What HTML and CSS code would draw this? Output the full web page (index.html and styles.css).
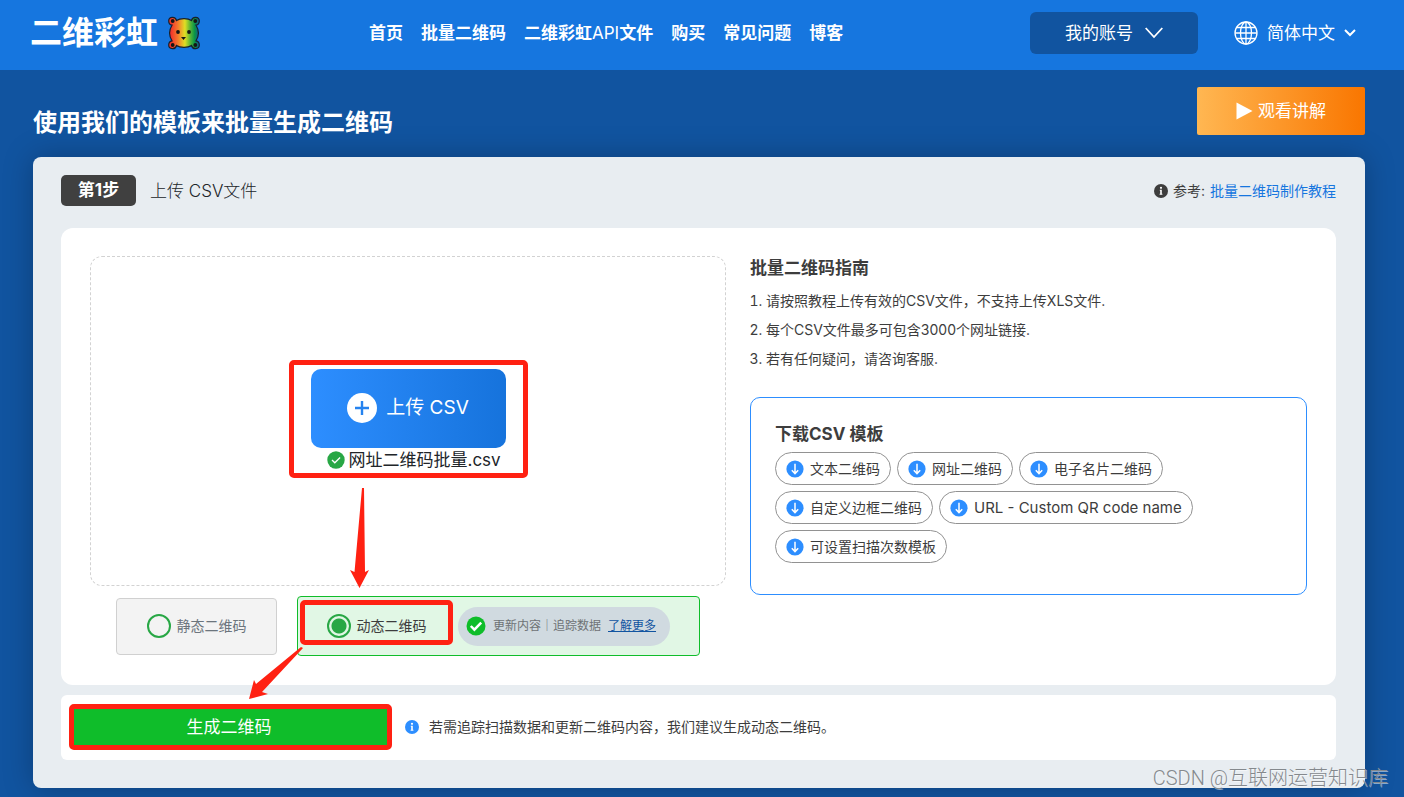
FILE: index.html
```html
<!DOCTYPE html>
<html lang="zh-CN">
<head>
<meta charset="utf-8">
<meta name="viewport" content="width=device-width, initial-scale=1">
<title>二维彩虹 - 批量二维码</title>
<link rel="stylesheet" href="styles.css">
</head>
<body>
<svg class="sprite" aria-hidden="true">
  <symbol id="down" viewBox="0 0 18 18"><circle cx="9" cy="9" r="8.6" fill="#2d8eff"/><path d="M9 3.8v9.6M5.8 10.3 9 13.6l3.2-3.3" fill="none" stroke="#fff" stroke-width="1.5"/></symbol>
  <symbol id="info" viewBox="0 0 14 14"><circle cx="7" cy="7" r="7" fill="currentColor"/><circle cx="7" cy="3.8" r="1.1" fill="#fff"/><path d="M5.8 5.8h2v4h.6v1H5.6v-1h.6V6.800h-.4z" fill="#fff"/></symbol>
</svg>
<header class="topbar">
  <a class="logo" href="#">二维彩虹
    <svg width="32" height="34" viewBox="0 0 32 34" aria-hidden="true">
      <defs><linearGradient id="rainbow"><stop offset="0.08" stop-color="#f2352b"/><stop offset="0.3" stop-color="#f5792d"/><stop offset="0.53" stop-color="#dfdf24"/><stop offset="0.7" stop-color="#5cb635"/><stop offset="0.85" stop-color="#079447"/><stop offset="1" stop-color="#16529b"/></linearGradient></defs>
      <path d="M8.500 4.500C12 2 20 2 23.500 4.500C24.500 0 31.300.5 31.300 5C31.300 7.800 29 9 28 9.200C31 14 31 20 28 24.800C29 25 31.300 26.200 31.300 29C31.300 33.500 24.500 34 23.500 29.500C20 32 12 32 8.500 29.500C7.500 34 .7 33.500.7 29C.7 26.200 3 25 4 24.800C1 20 1 14 4 9.200C3 9 .7 7.800.7 5C.7.5 7.500 0 8.500 4.500Z" fill="url(#rainbow)" stroke="#17202b" stroke-width="1.200"/>
      <g fill="#151515"><circle cx="4.700" cy="5" r="1.900"/><circle cx="27.300" cy="5" r="1.900"/><circle cx="4.700" cy="29" r="1.900"/><circle cx="27.300" cy="29" r="1.900"/><circle cx="10" cy="16" r="1.900"/><circle cx="21" cy="16" r="1.900"/><path d="M13 21h5l-2.500 3z"/></g>
    </svg>
  </a>
  <nav class="nav"><a href="#">首页</a><a href="#">批量二维码</a><a href="#">二维彩虹<span class="thin">API</span>文件</a><a href="#">购买</a><a href="#">常见问题</a><a href="#">博客</a></nav>
  <div class="actions">
    <button class="account" type="button">我的账号
      <svg width="18" height="12" viewBox="0 0 18 12" fill="none" stroke="#fff" stroke-width="1.800"><path d="m.7 1 8.300 9 8.300-9"/></svg>
    </button>
    <label class="language">
      <svg width="24" height="24" viewBox="0 0 24 24" fill="none" stroke="#fff" stroke-width="1.300"><circle cx="12" cy="12" r="11"/><ellipse cx="12" cy="12" rx="5.500" ry="11"/><path d="M12 1v22M1 12h22M2.500 6.500h19M2.500 17.500h19"/></svg>
      <select class="language-select" aria-label="语言"><option>简体中文</option></select>
      <svg width="12" height="8" viewBox="0 0 12 8" fill="none" stroke="#fff" stroke-width="2"><path d="m1 1 5 5 5-5"/></svg>
    </label>
  </div>
</header>
<main class="page">
  <div class="title-row">
    <h1 class="title">使用我们的模板来批量生成二维码</h1>
    <button class="watch" type="button"><svg width="17" height="18" viewBox="0 0 17 18"><path d="M.5.5v17l16-8.500z" fill="#fff"/></svg>观看讲解</button>
  </div>
  <section class="panel">
    <div class="panel-head">
      <strong class="step">第1步</strong>
      <span class="step-name">上传 CSV文件</span>
      <span class="reference"><svg class="info-icon"><use href="#info"/></svg>参考: <a href="#">批量二维码制作教程</a></span>
    </div>
    <div class="card work">
      <div>
        <div class="dropzone">
          <div class="upload-block">
            <button class="upload" type="button">
              <svg width="30" height="30" viewBox="0 0 30 30"><circle cx="15" cy="15" r="15" fill="#fff"/><path d="M8 15h14M15 8v14" stroke="#2583ef" stroke-width="2.400"/></svg>上传 CSV
            </button>
            <div class="file"><svg width="18" height="18" viewBox="0 0 18 18"><circle cx="9" cy="9" r="8.700" fill="#28a745"/><path d="m5 9 2.800 2.800 5.300-5.300" fill="none" stroke="#fff" stroke-width="1.300"/></svg>网址二维码批量.csv</div>
            <span class="mark mark-upload"></span>
            <svg class="arrow-down" width="22" height="102" viewBox="0 0 22 102" aria-hidden="true"><path d="M13 0h2l1 84 4-2-9.500 18L1 82l4.500 2z" fill="#ff2112"/></svg>
          </div>
        </div>
        <div class="options">
          <label class="option static"><input class="radio" type="radio" name="kind">静态二维码</label>
          <div class="option dynamic">
            <label class="dynamic-label"><input class="radio" type="radio" name="kind" checked>动态二维码<span class="mark mark-option"></span></label>
            <div class="features"><svg width="20" height="20" viewBox="0 0 20 20"><circle cx="10" cy="10" r="9.500" fill="#0fbd2a"/><path d="m4.800 10 3.600 3.700 6.800-7" fill="none" stroke="#fff" stroke-width="2.500"/></svg><span>更新内容｜追踪数据</span><a href="#">了解更多</a></div>
            <svg class="arrow-diagonal" width="58" height="56" viewBox="0 0 58 56" aria-hidden="true"><path d="M54 2 9 39 7 35 2 54 21 49l-6-2L56 3z" fill="#ff2112"/></svg>
          </div>
        </div>
      </div>
      <div class="guide">
        <h2 class="heading">批量二维码指南</h2>
        <ol class="steps"><li>请按照教程上传有效的CSV文件，不支持上传XLS文件.</li><li>每个CSV文件最多可包含3000个网址链接.</li><li>若有任何疑问，请咨询客服.</li></ol>
        <div class="templates">
          <h2 class="heading">下载CSV 模板</h2>
          <div class="chips">
            <a class="chip" href="#"><svg><use href="#down"/></svg>文本二维码</a>
            <a class="chip" href="#"><svg><use href="#down"/></svg>网址二维码</a>
            <a class="chip" href="#"><svg><use href="#down"/></svg>电子名片二维码</a>
          </div>
          <div class="chips">
            <a class="chip" href="#"><svg><use href="#down"/></svg>自定义边框二维码</a>
            <a class="chip latin" href="#"><svg><use href="#down"/></svg>URL - Custom QR code name</a>
          </div>
          <div class="chips"><a class="chip" href="#"><svg><use href="#down"/></svg>可设置扫描次数模板</a></div>
        </div>
      </div>
    </div>
    <div class="card submit">
      <div class="generate-wrap"><button class="generate" type="button">生成二维码</button><span class="mark mark-generate"></span></div>
      <svg class="info-icon blue"><use href="#info"/></svg>
      <span>若需追踪扫描数据和更新二维码内容，我们建议生成动态二维码。</span>
    </div>
  </section>
</main>
<div class="watermark">CSDN @互联网运营知识库</div>
</body>
</html>
```

FILE: styles.css
```css
* { box-sizing: border-box; }
body {
  position: relative;
  margin: 0;
  min-height: 100vh;
  background: #1154a0;
  color: #3d3d3d;
  font: 14px/20px Inter, "Noto Sans CJK SC", sans-serif;
}
button, select, input { font: inherit; color: inherit; margin: 0; }
button { cursor: pointer; }
svg { flex: none; }
a { text-decoration: none; }
h1, h2, ol { margin: 0; padding: 0; }
.sprite { position: absolute; width: 0; height: 0; }

.topbar {
  display: flex;
  align-items: center;
  height: 70px;
  padding: 0 48px 4px 30px;
  background: #1676df;
  color: #fff;
  font-size: 17px;
  white-space: nowrap;
}
.topbar a { color: #fff; }
.logo { display: flex; align-items: center; gap: 10px; font-size: 32px; line-height: 40px; font-weight: 700; }
.nav { display: flex; gap: 18px; margin-left: 169px; font-weight: 700; }
.thin { font-weight: 400; }
.actions { display: flex; align-items: center; gap: 36px; margin-left: auto; }
.account {
  display: flex;
  align-items: center;
  justify-content: center;
  gap: 12px;
  width: 168px;
  height: 42px;
  border: 0;
  border-radius: 6px;
  background: #1154a0;
}
.language { display: flex; align-items: center; gap: 9px; }
.language-select { appearance: none; padding: 0; border: 0; background: transparent; }

.page { padding: 17px 39px 9px 33px; }
.title-row { display: flex; align-items: flex-end; justify-content: space-between; margin-bottom: 22px; color: #fff; }
.title { font-size: 24px; line-height: 24px; }
.watch {
  display: flex;
  align-items: center;
  justify-content: center;
  gap: 5px;
  width: 168px;
  height: 48px;
  border: 0;
  border-radius: 2px;
  background: linear-gradient(90deg, #ffb752, #f97600);
  font-size: 17px;
}
.panel {
  padding: 18px 29px 28px 28px;
  border-radius: 8px;
  background: #e8edf1;
  box-shadow: 0 0 30px rgba(0, 0, 0, .25);
}
.panel-head { display: flex; align-items: center; height: 31px; margin-bottom: 22px; }
.step {
  width: 75px;
  border-radius: 5px;
  background: #404040;
  color: #fff;
  font-size: 17px;
  line-height: 31px;
  text-align: center;
}
.step-name { margin-left: 14px; color: #212529; font-size: 17px; font-weight: 300; }
.reference { display: flex; align-items: center; gap: 5px; margin-left: auto; }
.reference a { color: #1676df; }
.info-icon { width: 14px; height: 14px; }
.blue { color: #2d8eff; }

.card { border-radius: 6px; background: #fff; }
.work {
  display: grid;
  grid-template-columns: 636fr 557fr;
  gap: 24px;
  margin-bottom: 10px;
  padding: 28px 29px 29px;
  border-radius: 12px;
}
.dropzone {
  display: flex;
  align-items: center;
  justify-content: center;
  height: 330px;
  padding-bottom: 2px;
  border: 1px dashed #d2d2d2;
  border-radius: 12px;
}
.upload-block { position: relative; width: 195px; }
.upload {
  display: flex;
  align-items: center;
  justify-content: center;
  gap: 9px;
  width: 100%;
  height: 79px;
  border: 0;
  border-radius: 10px;
  background: linear-gradient(90deg, #2d8eff, #1673dc);
  color: #fff;
  font-size: 19px;
}
.file {
  display: flex;
  align-items: center;
  gap: 4px;
  padding-left: 16px;
  color: #212529;
  font-size: 17px;
  line-height: 24px;
  white-space: nowrap;
}
.mark { position: absolute; border: 5px solid #ff2112; border-radius: 5px; pointer-events: none; }
.mark-upload { inset: -9px -22px -6px; }
.arrow-down { position: absolute; left: 38px; top: 119px; }

.options { display: flex; align-items: center; gap: 20px; margin-top: 10px; padding: 0 26px; }
.option { display: flex; align-items: center; border-radius: 4px; white-space: nowrap; }
.static {
  justify-content: center;
  gap: 6px;
  width: 161px;
  height: 57px;
  border: 1px solid #d0d0d0;
  background: #f3f3f3;
  color: #6c757d;
}
.radio {
  appearance: none;
  width: 24px;
  height: 24px;
  border: 2px solid #28a745;
  border-radius: 50%;
}
.radio:checked { background: radial-gradient(circle, #28a745 7px, transparent 8px); }
.dynamic { position: relative; flex: 1; gap: 5px; height: 60px; padding-left: 2px; border: 1px solid #0fbd2a; background: #e1f7e5; }
.dynamic-label {
  position: relative;
  display: flex;
  align-items: center;
  justify-content: center;
  gap: 6px;
  width: 153px;
}
.mark-option { inset: -14px 0 -7px; }
.features {
  display: flex;
  align-items: center;
  gap: 7px;
  height: 39px;
  padding: 0 14px 0 8px;
  border-radius: 20px;
  background: #d0dae0;
  color: #6e7275;
  font-size: 12px;
}
.features a { color: #1154a0; text-decoration: underline; }
.arrow-diagonal { position: absolute; left: -51px; top: 48px; }

.heading { font-size: 17px; line-height: 24px; }
.steps { margin: 6px 0 24px; padding-left: 16px; line-height: 29px; }
.templates { height: 198px; padding: 24px; border: 1px solid #2d8eff; border-radius: 10px; }
.chips { display: flex; gap: 6px; margin-top: 6px; }
.chip {
  display: flex;
  align-items: center;
  gap: 6px;
  height: 33px;
  padding: 0 10px;
  border: 1px solid #929292;
  border-radius: 17px;
  color: #3d3d3d;
  white-space: nowrap;
}
.chip svg { width: 18px; height: 18px; }
.latin { font-size: 15px; }

.submit { display: flex; align-items: center; min-height: 65px; padding: 0 10px 2px; }
.generate-wrap { position: relative; margin-right: 18px; }
.generate { width: 316px; height: 40px; border: 0; background: #0fbd2a; color: #fff; font-size: 17px; }
.mark-generate { inset: -3px -5px -3px -2px; }
.submit .info-icon { margin-right: 10px; }
.watermark {
  position: absolute;
  right: 16px;
  bottom: 7px;
  color: #85898d;
  font-family: Roboto, "Noto Sans CJK SC", sans-serif;
  font-size: 20px;
  font-weight: 300;
  line-height: 24px;
  text-shadow: 1px 1px 0 rgba(255, 255, 255, .5);
}
```
